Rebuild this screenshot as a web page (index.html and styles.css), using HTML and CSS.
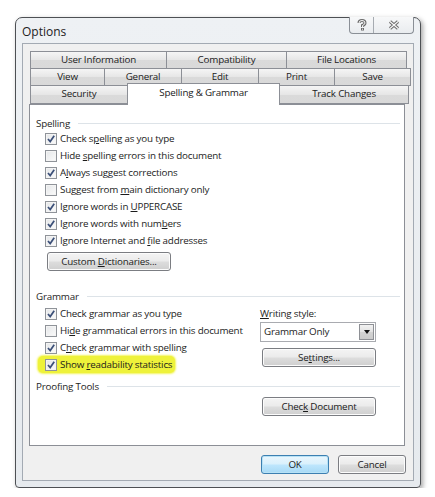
FILE: index.html
```html
<!DOCTYPE html>
<html lang="en">
<head>
    <meta charset="UTF-8">
    <title>Options</title>
    <link rel="stylesheet" href="styles.css">
</head>
<body>
    <div class="window">
        <div class="titlebar">
            <span class="title">Options</span>
            <div class="caption-btns">
                <span class="cap help">
                    <svg width="10" height="12" viewBox="0 0 10 12">
                        <path d="M2 4 Q2 1.5 5 1.5 Q8 1.5 8 4 Q8 5.5 5.5 6.5 L5.5 8" fill="none" stroke="#6b6b6b" stroke-width="3"/>
                        <rect x="4" y="9" width="3" height="2.5" fill="#6b6b6b"/>
                        <path d="M2 4 Q2 1.5 5 1.5 Q8 1.5 8 4 Q8 5.5 5.5 6.5 L5.5 8" fill="none" stroke="#fafafa" stroke-width="1"/>
                        <rect x="5" y="9.7" width="1" height="1" fill="#fafafa"/>
                    </svg>
                </span>
                <span class="cap close">
                    <svg width="12" height="10" viewBox="0 0 12 10">
                        <path d="M2 1.5 L10 8.5 M10 1.5 L2 8.5" stroke="#6b6b6b" stroke-width="3.2"/>
                        <path d="M2 1.5 L10 8.5 M10 1.5 L2 8.5" stroke="#fafafa" stroke-width="1.1"/>
                    </svg>
                </span>
            </div>
        </div>

        <div class="client">
            <div class="tabs">
                <div class="tab-row row1">
                    <div class="tab">User Information</div>
                    <div class="tab">Compatibility</div>
                    <div class="tab">File Locations</div>
                </div>
                <div class="tab-row row2">
                    <div class="tab">View</div>
                    <div class="tab">General</div>
                    <div class="tab">Edit</div>
                    <div class="tab">Print</div>
                    <div class="tab">Save</div>
                </div>
                <div class="tab-row row3">
                    <div class="tab">Security</div>
                    <div class="tab active">Spelling &amp; Grammar</div>
                    <div class="tab">Track Changes</div>
                </div>
            </div>

            <div class="panel">
                <div class="group-head"><span>Spelling</span><i class="rule"></i></div>
                <div class="checks spelling">
                    <div class="check"><span class="box on"></span><span>Check s<u>p</u>elling as you type</span></div>
                    <div class="check"><span class="box"></span><span>Hide <u>s</u>pelling errors in this document</span></div>
                    <div class="check"><span class="box on"></span><span>A<u>l</u>ways suggest corrections</span></div>
                    <div class="check"><span class="box"></span><span>Suggest from <u>m</u>ain dictionary only</span></div>
                    <div class="check"><span class="box on"></span><span>Ignore words in <u>U</u>PPERCASE</span></div>
                    <div class="check"><span class="box on"></span><span>Ignore words with num<u>b</u>ers</span></div>
                    <div class="check"><span class="box on"></span><span>Ignore Internet and <u>f</u>ile addresses</span></div>
                </div>
                <button class="btn dict">Custom <u>D</u>ictionaries...</button>

                <div class="group-head grammar-head"><span>Grammar</span><i class="rule"></i></div>
                <div class="grammar">
                    <div class="checks">
                        <div class="check"><span class="box on"></span><span>Check <u>g</u>rammar as you type</span></div>
                        <div class="check"><span class="box"></span><span>Hi<u>d</u>e grammatical errors in this document</span></div>
                        <div class="check"><span class="box on"></span><span>C<u>h</u>eck grammar with spelling</span></div>
                        <div class="check marked"><span class="box on"></span><span>Show <u>r</u>eadability statistics</span></div>
                    </div>
                    <div class="style-col">
                        <div class="style-label"><u>W</u>riting style:</div>
                        <div class="select">
                            <span class="select-value">Grammar Only</span>
                            <span class="select-arrow"></span>
                        </div>
                        <button class="btn settings">Se<u>t</u>tings...</button>
                    </div>
                </div>

                <div class="group-head proof-head"><span>Proofing Tools</span><i class="rule"></i></div>
                <button class="btn check-doc">Chec<u>k</u> Document</button>
            </div>

            <div class="dialog-buttons">
                <button class="btn default">OK</button>
                <button class="btn">Cancel</button>
            </div>
        </div>
    </div>
</body>
</html>
```

FILE: styles.css
```css
body {
    margin: 0;
    background: #ffffff;
    font-family: 'Open Sans', 'Noto Sans', sans-serif;
    font-size: 9.8px;
    letter-spacing: -0.2px;
    color: #1b1b1b;
}
u {
    text-decoration-thickness: 1px;
    text-underline-offset: 1px;
}
.window {
    box-sizing: border-box;
    width: 406px;
    height: 471px;
    margin: 17px 0 0 15px;
    padding: 0 6px;
    border: 1px solid #4d5054;
    border-radius: 7px 7px 4px 4px;
    background: linear-gradient(#eef1f4, #e6eaee);
    box-shadow: 2px 2px 5px rgba(0, 0, 0, 0.35);
}
.titlebar {
    height: 25px;
    display: flex;
    justify-content: space-between;
    align-items: flex-start;
}
.title {
    font-size: 12px;
    letter-spacing: 0;
    padding-top: 5px;
    color: #222;
}
.caption-btns {
    display: flex;
    margin-top: -1px;
    height: 16px;
    border: 1px solid #8a8f96;
    border-top: none;
    border-radius: 0 0 4px 4px;
    background: linear-gradient(#f7f8f9, #e9ecef);
}
.cap {
    display: flex;
    align-items: center;
    justify-content: center;
}
.cap.help {
    width: 23px;
    border-right: 1px solid #a6abb1;
}
.cap.close {
    width: 39px;
}
.client {
    box-sizing: border-box;
    height: 438px;
    border: 1px solid #a3aab3;
    background: #f0f0f0;
    padding: 7px 8px 0 6px;
}
.tabs {
    margin-left: 1px;
}
.tab-row {
    display: grid;
}
.row1 {
    grid-template-columns: 137px 120px 120px;
}
.row2 {
    grid-template-columns: 75px 77px 77px 76px 76px;
    margin-top: -1px;
}
.row3 {
    grid-template-columns: 98px 152px 129px;
    margin-top: -1px;
}
.tab {
    box-sizing: border-box;
    height: 18px;
    margin-left: -1px;
    border: 1px solid #8c8f96;
    background: linear-gradient(#f5f5f5, #e6e6e6 50%, #dadada 51%, #d9d9d9);
    text-align: center;
    line-height: 16px;
    color: #202020;
}
.tab:first-child {
    margin-left: 0;
}
.row3 .tab {
    height: 19px;
}
.tab.active {
    position: relative;
    z-index: 1;
    height: 22px;
    margin-top: -2px;
    background: #ffffff;
    border-bottom: none;
    line-height: 18px;
}
.panel {
    box-sizing: border-box;
    height: 342px;
    margin-top: -1px;
    border: 1px solid #8c8f96;
    background: #ffffff;
    padding: 11px 4px 0 6px;
}
.group-head {
    display: flex;
    align-items: center;
    gap: 8px;
    height: 14px;
    color: #1e1e1e;
}
.rule {
    flex: 1;
    height: 1px;
    background: #dde3e8;
}
.checks {
    padding-left: 9px;
}
.check {
    display: flex;
    align-items: center;
    gap: 3px;
    height: 17px;
    white-space: nowrap;
}
.box {
    box-sizing: border-box;
    width: 12px;
    height: 12px;
    border: 1px solid #8f9399;
    background: linear-gradient(135deg, #e4e6e8, #fbfbfb);
    box-shadow: inset 0 0 0 1px #f4f4f4;
}
.box.on {
    background: url("data:image/svg+xml,%3Csvg xmlns='http://www.w3.org/2000/svg' width='10' height='10'%3E%3Cpath d='M2 5 L4.2 7.6 L8.2 1.8' fill='none' stroke='%233b4f78' stroke-width='1.7'/%3E%3C/svg%3E") center no-repeat, linear-gradient(135deg, #e4e6e8, #fbfbfb);
}
.check.marked {
    width: max-content;
    margin-left: -7px;
    padding: 0 3px 0 7px;
    background: #eef23a;
    border-radius: 5px;
    box-shadow: 0 0 2px 1px #f3f55c;
}
.btn {
    box-sizing: border-box;
    display: block;
    height: 19px;
    padding: 0;
    border: 1px solid #7b7d82;
    border-radius: 3px;
    background: linear-gradient(#f4f4f4, #ebebeb 48%, #dddddd 52%, #cfcfcf);
    box-shadow: inset 0 0 0 1px #fcfcfc;
    font-family: inherit;
    font-size: inherit;
    letter-spacing: inherit;
    color: #1b1b1b;
}
.dict {
    width: 124px;
    margin: 3px 0 0 11px;
}
.grammar-head {
    margin-top: 18px;
}
.grammar {
    display: flex;
    margin-top: 2px;
}
.grammar .checks {
    width: 215px;
}
.style-col {
    width: 116px;
}
.style-label {
    height: 17px;
    line-height: 17px;
}
.select {
    box-sizing: border-box;
    display: flex;
    height: 20px;
    border: 1px solid #a9abb0;
    background: #ffffff;
    padding: 1px;
}
.select-value {
    flex: 1;
    padding-left: 2px;
    line-height: 16px;
}
.select-arrow {
    box-sizing: border-box;
    width: 15px;
    border: 1px solid #8e9095;
    background: linear-gradient(#f2f2f2, #e2e2e2 50%, #d3d3d3 51%, #cbcbcb);
    display: flex;
    align-items: center;
    justify-content: center;
}
.select-arrow::after {
    content: "";
    border-left: 3px solid transparent;
    border-right: 3px solid transparent;
    border-top: 4px solid #111;
}
.settings {
    width: 114px;
    margin: 6px 0 0 2px;
}
.proof-head {
    margin-top: 6px;
}
.check-doc {
    width: 114px;
    margin: 4px 0 0 226px;
}
.dialog-buttons {
    display: flex;
    justify-content: flex-end;
    gap: 9px;
    margin: 9px -1px 0 0;
}
.dialog-buttons .btn {
    width: 68px;
}
.btn.default {
    border-color: #3c7fb1;
    box-shadow: inset 0 0 0 1px #b7e2f6;
    background: linear-gradient(#eaf6fd, #d9f0fc 48%, #bee6fd 52%, #a7d9f5);
}
```
